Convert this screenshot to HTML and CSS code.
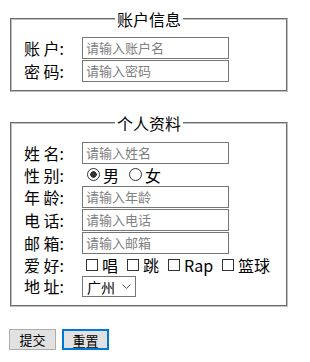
FILE: index.html
```html
<!DOCTYPE html>
<html>
<head>
    <title>注册表单</title>
    <link rel="stylesheet" href="styles.css">
</head>
<body>
    <form>
        <fieldset class="box">
            <legend>账户信息</legend>
            <div class="row">
                <label class="key">账 户:</label>
                <input class="field" type="text" placeholder="请输入账户名">
            </div>
            <div class="row">
                <label class="key">密 码:</label>
                <input class="field" type="password" placeholder="请输入密码">
            </div>
        </fieldset>

        <fieldset class="box box-info">
            <legend>个人资料</legend>
            <div class="row">
                <label class="key">姓 名:</label>
                <input class="field" type="text" placeholder="请输入姓名">
            </div>
            <div class="row row-short">
                <label class="key">性 别:</label>
                <label class="choice"><input class="radio" type="radio" name="sex" checked>男</label>
                <label class="choice"><input class="radio" type="radio" name="sex">女</label>
            </div>
            <div class="row">
                <label class="key">年 龄:</label>
                <input class="field" type="text" placeholder="请输入年龄">
            </div>
            <div class="row">
                <label class="key">电 话:</label>
                <input class="field" type="text" placeholder="请输入电话">
            </div>
            <div class="row">
                <label class="key">邮 箱:</label>
                <input class="field" type="text" placeholder="请输入邮箱">
            </div>
            <div class="row row-short">
                <label class="key">爱 好:</label>
                <label class="choice"><input class="check" type="checkbox">唱</label>
                <label class="choice"><input class="check" type="checkbox">跳</label>
                <label class="choice"><input class="check" type="checkbox">Rap</label>
                <label class="choice"><input class="check" type="checkbox">篮球</label>
            </div>
            <div class="row row-select">
                <label class="key">地 址:</label>
                <span class="select-wrap">
                    <select class="city">
                        <option>广州</option>
                        <option>深圳</option>
                        <option>北京</option>
                    </select>
                    <svg class="chevron" width="9" height="5" viewBox="0 0 9 5">
                        <path d="M0.5 0.5 L4.5 4.5 L8.5 0.5" fill="none" stroke="#555" stroke-width="1"/>
                    </svg>
                </span>
            </div>
        </fieldset>

        <div class="actions">
            <button class="btn" type="submit">提交</button>
            <button class="btn btn-focus" type="reset">重置</button>
        </div>
    </form>
</body>
</html>
```

FILE: styles.css
```css
body {
    margin: 8px;
    font-family: "Noto Sans CJK SC", "Microsoft YaHei", sans-serif;
    font-size: 16px;
    color: #000;
    background: #fff;
}

.box {
    box-sizing: border-box;
    width: 278px;
    margin: 0 2px;
    padding: 6px 12px 8px;
    border: 2px groove #c0c0c0;
}

.box-info {
    margin-top: 20px;
    padding-top: 7px;
}

legend {
    margin: 0 auto;
    padding: 0 2px;
    line-height: 22px;
}

.row {
    display: flex;
    align-items: center;
    height: 23px;
    line-height: 20px;
    white-space: nowrap;
}

.row-short {
    height: 21px;
    line-height: 18px;
}

.row-select {
    height: 22px;
}

.key {
    flex: none;
    width: 58px;
}

.field {
    box-sizing: border-box;
    width: 147px;
    height: 22px;
    margin: 0;
    padding: 0 3px;
    border: 1px solid #767676;
    border-radius: 0;
    font-family: "Noto Sans CJK SC", sans-serif;
    font-size: 13px;
    outline: none;
}

.field::placeholder {
    color: #808080;
}

.choice {
    flex: none;
    display: flex;
    align-items: center;
    margin-right: 5px;
}

.choice:last-child {
    margin-right: 0;
}

.radio,
.check {
    appearance: none;
    box-sizing: border-box;
    width: 13px;
    height: 13px;
    margin: 0 3px 0 5px;
    border: 1px solid #333;
    background: #fff;
}

.radio {
    border-radius: 50%;
}

.radio:checked {
    background: radial-gradient(circle, #333 0 3px, #fff 3.5px);
}

.check {
    width: 12px;
    height: 12px;
    margin: 0 4px 0 4px;
}

.select-wrap {
    position: relative;
    display: inline-flex;
}

.city {
    appearance: none;
    box-sizing: border-box;
    width: 54px;
    height: 21px;
    margin: 0;
    padding: 0 0 0 4px;
    border: 1px solid #767676;
    border-radius: 0;
    background: #fff;
    font-family: "Noto Sans CJK SC", sans-serif;
    font-size: 14px;
    color: #000;
}

.chevron {
    position: absolute;
    right: 5px;
    top: 8px;
    pointer-events: none;
}

.actions {
    display: flex;
    gap: 6px;
    margin: 22px 0 0 1px;
}

.btn {
    box-sizing: border-box;
    width: 47px;
    height: 21px;
    padding: 0;
    border: 1px solid #adadad;
    background: #e1e1e1;
    font-family: "Noto Sans CJK SC", sans-serif;
    font-size: 13px;
    color: #000;
}

.btn-focus {
    border: 2px solid #0078d7;
}
```
